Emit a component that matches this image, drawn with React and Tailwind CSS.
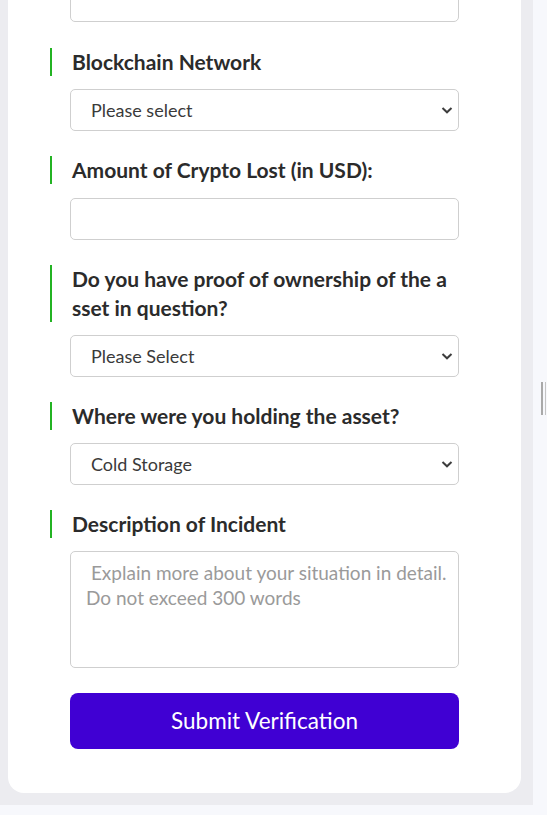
import { useState } from "react";

const Chevron = () => (
  <svg
    className="pointer-events-none absolute right-[5px] top-1/2 -translate-y-1/2"
    width="14"
    height="14"
    viewBox="0 0 14 14"
    fill="none"
  >
    <path d="M2.5 5 L7 9.3 L11.5 5" stroke="#3d3d3d" strokeWidth="2" />
  </svg>
);

const Label = ({ children }) => (
  <p className="ml-[-20px] border-l-2 border-[#23b323] pl-5 text-[21px] font-bold leading-7 text-[#2b2b2b]">
    {children}
  </p>
);

const SelectField = ({ value, options, onChange }) => (
  <div className="relative mt-[13px]">
    <select
      value={value}
      onChange={(e) => onChange(e.target.value)}
      className="h-[42px] w-full appearance-none rounded-[5px] border border-[#cfcfcf] bg-white pl-5 pr-8 text-[18px] text-[#3a3a3a] outline-none"
    >
      {options.map((o) => (
        <option key={o}>{o}</option>
      ))}
    </select>
    <Chevron />
  </div>
);

const App = () => {
  const [network, setNetwork] = useState("Please select");
  const [proof, setProof] = useState("Please Select");
  const [holding, setHolding] = useState("Cold Storage");
  const [amount, setAmount] = useState("");
  const [desc, setDesc] = useState("");

  return (
    <div
      className="flex h-[815px] w-[547px] overflow-hidden bg-[#f7f8fc]"
      style={{ fontFamily: "Lato, 'Noto Sans', sans-serif" }}
    >
      <div className="h-[805px] w-[533px] shrink-0 overflow-hidden bg-[#ececf0] pl-2 pr-3">
        <div className="rounded-b-2xl bg-white px-[62px] pb-[44px]">
          <input
            type="text"
            className="-mt-[20px] block h-[42px] w-full rounded-[5px] border border-[#cfcfcf] bg-white"
          />

          <div className="mt-[26px]">
            <Label>Blockchain Network</Label>
            <SelectField
              value={network}
              onChange={setNetwork}
              options={["Please select", "Bitcoin", "Ethereum", "BNB Smart Chain", "Solana", "Tron"]}
            />
          </div>

          <div className="mt-[25px]">
            <Label>Amount of Crypto Lost (in USD):</Label>
            <input
              type="text"
              value={amount}
              onChange={(e) => setAmount(e.target.value)}
              className="mt-[14px] block h-[42px] w-full rounded-[5px] border border-[#cfcfcf] bg-white px-5 text-[18px] outline-none"
            />
          </div>

          <div className="mt-[25px]">
            <p className="ml-[-20px] border-l-2 border-[#23b323] pl-5 text-[21px] font-bold leading-[28.5px] text-[#2b2b2b]">
              Do you have proof of ownership of the a<br />sset in question?
            </p>
            <SelectField value={proof} onChange={setProof} options={["Please Select", "Yes", "No"]} />
          </div>

          <div className="mt-[25px]">
            <Label>Where were you holding the asset?</Label>
            <SelectField
              value={holding}
              onChange={setHolding}
              options={["Cold Storage", "Hot Wallet", "Exchange", "Other"]}
            />
          </div>

          <div className="mt-[25px]">
            <Label>Description of Incident</Label>
            <textarea
              value={desc}
              onChange={(e) => setDesc(e.target.value)}
              placeholder={" Explain more about your situation in detail.\nDo not exceed 300 words"}
              className="mt-[13px] block h-[117px] w-full resize-none rounded-[5px] border border-[#cfcfcf] bg-white pl-[15px] pr-[2px] pt-[8px] text-[19px] leading-[25px] text-[#333] outline-none placeholder:text-[#9a9a9a]"
            />
          </div>

          <button
            type="button"
            className="mt-[25px] h-[56px] w-full cursor-pointer rounded-lg bg-[#4000d3] text-[22.5px] text-white"
          >
            Submit Verification
          </button>
        </div>
      </div>

      <div className="flex-1 pl-2 pt-[382px]">
        <div className="flex gap-[2px]">
          <span className="h-[33px] w-[2px] bg-[#a9a9a9]"></span>
          <span className="h-[33px] w-[1px] bg-[#c4c4c4]"></span>
        </div>
      </div>
    </div>
  );
};

export default App;
